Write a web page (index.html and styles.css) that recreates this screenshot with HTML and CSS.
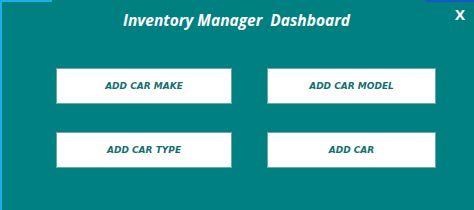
FILE: index.html
```html
<!DOCTYPE html>
<html lang="en">
<head>
  <meta charset="utf-8">
  <title>Inventory Manager Dashboard</title>
  <link rel="stylesheet" href="styles.css">
</head>
<body>
  <div class="window">
    <div class="top-edge"></div>
    <div class="header">
      <h1 class="title">Inventory Manager&nbsp; Dashboard</h1>
      <button class="close" aria-label="Close">X</button>
    </div>
    <div class="menu">
      <button class="menu-btn">ADD CAR MAKE</button>
      <button class="menu-btn">ADD CAR MODEL</button>
      <button class="menu-btn">ADD CAR TYPE</button>
      <button class="menu-btn">ADD CAR</button>
    </div>
  </div>
</body>
</html>
```

FILE: styles.css
```css
:root {
  --teal: #008080;
  --btn-text: #137070;
  --edge-light: #1aaeea;
  --edge-dark: #1658c8;
}

* {
  box-sizing: border-box;
  margin: 0;
  padding: 0;
}

body {
  width: 474px;
  height: 210px;
  overflow: hidden;
  background-color: var(--teal);
}

.window {
  height: 210px;
  border-left: 2px solid var(--edge-light);
  background-color: var(--teal);
}

.top-edge {
  height: 2px;
  background: linear-gradient(to right,
    var(--edge-light) 0, var(--edge-light) 50px,
    var(--teal) 50px, var(--teal) 423px,
    var(--edge-dark) 423px);
}

.header {
  position: relative;
  height: 38px;
  display: flex;
  justify-content: center;
  padding-top: 7px;
}

.title {
  font-family: "Open Sans", sans-serif;
  font-size: 15.5px;
  font-weight: 700;
  font-style: italic;
  color: #ffffff;
  white-space: pre;
  margin-right: 3px;
}

.close {
  position: absolute;
  right: 9px;
  top: 2px;
  background: none;
  border: none;
  color: #ffffff;
  font-family: "Open Sans", sans-serif;
  font-size: 15px;
  font-weight: 700;
}

.menu {
  display: grid;
  grid-template-columns: 176px 169px;
  column-gap: 35px;
  row-gap: 28px;
  padding: 28px 0 0 54px;
}

.menu-btn {
  height: 36px;
  background-color: #ffffff;
  border: 1px solid #6aa8a8;
  color: var(--btn-text);
  font-family: "DejaVu Sans", sans-serif;
  font-size: 9px;
  font-weight: 700;
  font-style: italic;
}
```
